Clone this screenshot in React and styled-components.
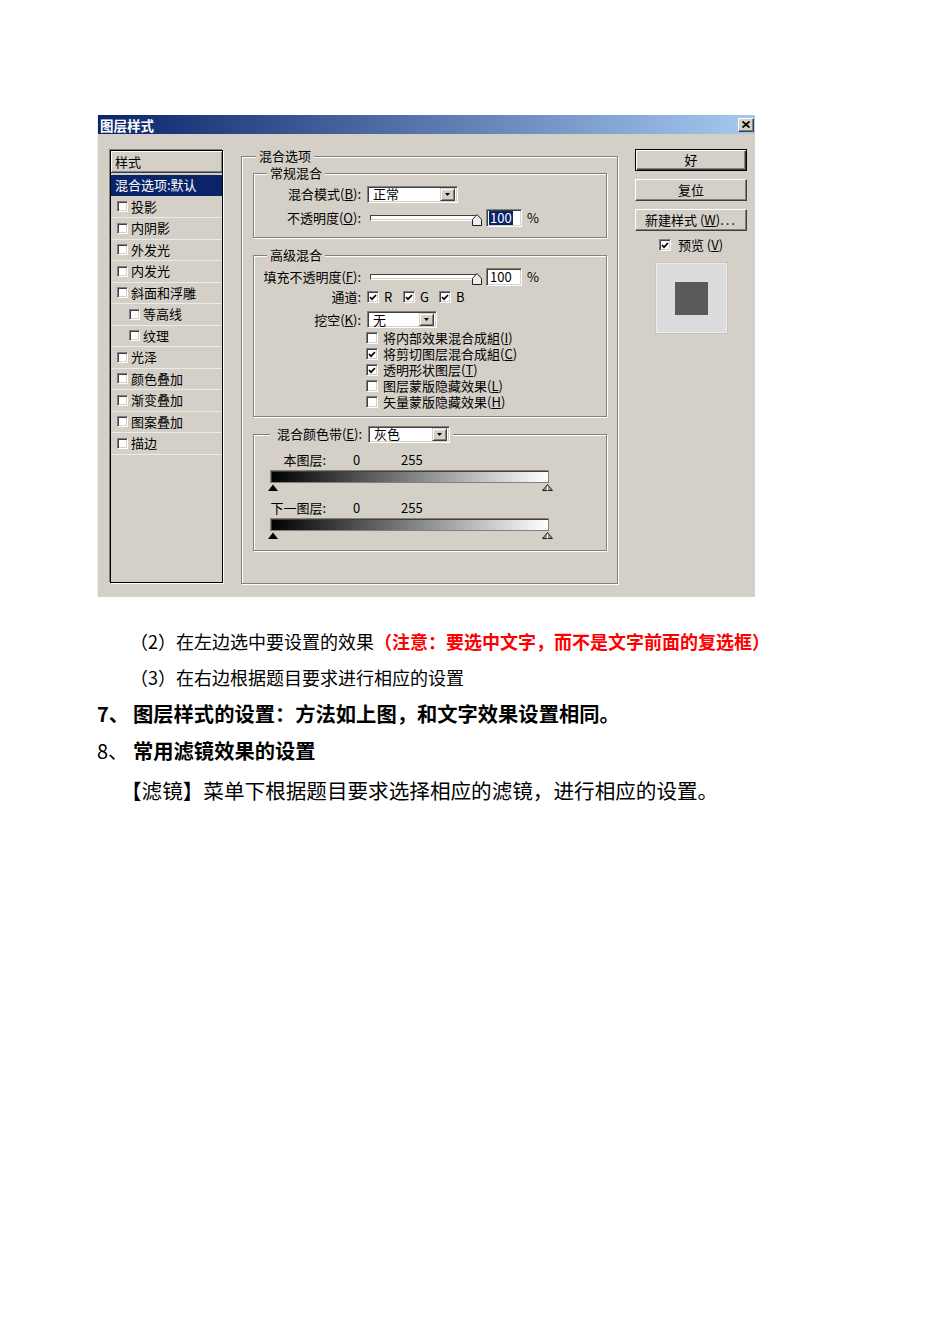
import React from "react";
import styled, { createGlobalStyle } from "styled-components";

const GlobalStyle = createGlobalStyle`
  body {
    margin: 0;
    background: #fff;
    color: #000;
    font-family: "Noto Sans CJK SC", "Noto Sans", sans-serif;
  }
`;

const Page = styled.div`
  width: 950px;
  min-height: 1317px;
  box-sizing: border-box;
  padding: 115px 0 0 97px;
`;

/* ---------- dialog frame ---------- */

const Dialog = styled.div`
  width: 658px;
  height: 482px;
  box-sizing: border-box;
  background: #d4d0c8;
  border-left: 1px solid #f4f2ee;
  display: flex;
  flex-direction: column;
  font-size: 13px;
  line-height: 14px;
`;

const TitleBar = styled.div`
  height: 19px;
  flex-shrink: 0;
  display: flex;
  align-items: center;
  justify-content: space-between;
  padding: 0 1px 0 2px;
  background: linear-gradient(to right, #0a246a, #a6caf0);
  color: #fff;
  font-size: 13.5px;
  font-weight: 700;
`;

const CloseButton = styled.div`
  width: 16px;
  height: 14px;
  box-sizing: border-box;
  background: #d4d0c8;
  border: 1px solid;
  border-color: #fff #404040 #404040 #fff;
  box-shadow: inset -1px -1px 0 #808080;
  display: flex;
  align-items: center;
  justify-content: center;
`;

const Body = styled.div`
  display: flex;
  align-items: flex-start;
  padding: 15px 0 0 12px;
`;

/* ---------- left style list ---------- */

const StyleList = styled.div`
  width: 113px;
  height: 433px;
  margin-top: 1px;
  box-sizing: border-box;
  border: 1px solid #000;
  box-shadow: -1px -1px 0 #808080, 1px 1px 0 #fff;
  flex-shrink: 0;
`;

const ListHeader = styled.div`
  height: 22px;
  box-sizing: border-box;
  padding-left: 4px;
  display: flex;
  align-items: center;
  border-bottom: 1px solid #404040;
  box-shadow: inset 1px 1px 0 #fff, inset -1px -1px 0 #808080;
  margin-bottom: 2px;
`;

const ListItem = styled.div`
  height: 21.5px;
  box-sizing: border-box;
  display: flex;
  align-items: center;
  gap: 3px;
  padding-left: ${(p) => (p.$selected ? 4 : 6 + p.$level * 12)}px;
  background: ${(p) => (p.$selected ? "#0a246a" : "transparent")};
  color: ${(p) => (p.$selected ? "#fff" : "#000")};
  border-bottom: 1px solid ${(p) => (p.$selected ? "#d4d0c8" : "#eeebe5")};
  white-space: nowrap;
`;

/* ---------- group boxes ---------- */

const Group = styled.div`
  width: ${(p) => p.$w}px;
  height: ${(p) => p.$h}px;
  margin: ${(p) => p.$mt}px 0 0 ${(p) => p.$ml}px;
  box-sizing: border-box;
  border: 1px solid #808080;
  box-shadow: inset 1px 1px 0 #fff, 1px 1px 0 #fff;
  flex-shrink: 0;
`;

const GroupTitle = styled.div`
  width: fit-content;
  height: ${(p) => p.$h}px;
  margin: ${(p) => -(p.$h / 2 + 1)}px 0 0 ${(p) => p.$ml}px;
  padding: 0 3px;
  display: flex;
  align-items: center;
  gap: 6px;
  background: #d4d0c8;
`;

const FieldRow = styled.div`
  height: ${(p) => p.$h}px;
  margin-top: ${(p) => p.$mt || 0}px;
  padding-left: ${(p) => p.$pl || 0}px;
  display: flex;
  align-items: center;
`;

const FieldLabel = styled.div`
  width: 107px;
  margin-right: 6px;
  text-align: right;
  flex-shrink: 0;
  white-space: nowrap;
`;

const BoxLabel = styled.span`
  display: block;
  height: 14px;
  line-height: 14px;
  margin-left: ${(p) => p.$gap}px;
  white-space: nowrap;
`;

/* ---------- controls ---------- */

const CheckBox = styled.span`
  width: ${(p) => p.$size}px;
  height: ${(p) => p.$size}px;
  box-sizing: border-box;
  flex-shrink: 0;
  background: #fff;
  border: 1px solid;
  border-color: #808080 #fff #fff #808080;
  box-shadow: inset 1px 1px 0 #404040, inset -1px -1px 0 #d4d0c8;
  display: flex;
  align-items: center;
  justify-content: center;
`;

const Check = ({ checked, size = 12 }) => (
  <CheckBox $size={size}>
    {checked && (
      <svg width="8" height="7" viewBox="0 0 8 7">
        <path d="M1 3 L3 5.2 L7 1" stroke="#000" strokeWidth="1.7" fill="none" />
      </svg>
    )}
  </CheckBox>
);

const SelectBox = styled.div`
  width: ${(p) => p.$w}px;
  height: 17px;
  box-sizing: border-box;
  flex-shrink: 0;
  background: #fff;
  border: 1px solid;
  border-color: #808080 #fff #fff #808080;
  box-shadow: inset 1px 1px 0 #404040, inset -1px -1px 0 #d4d0c8;
  display: flex;
  align-items: center;
  justify-content: space-between;
  padding: 0 2px 0 5px;
`;

const DropButton = styled.div`
  width: 15px;
  height: 13px;
  box-sizing: border-box;
  background: #d4d0c8;
  border: 1px solid;
  border-color: #d4d0c8 #404040 #404040 #d4d0c8;
  box-shadow: inset 1px 1px 0 #fff, inset -1px -1px 0 #808080;
  display: flex;
  align-items: center;
  justify-content: center;
`;

const Select = ({ value, width }) => (
  <SelectBox $w={width}>
    <span>{value}</span>
    <DropButton>
      <svg width="5" height="3" viewBox="0 0 5 3">
        <polygon points="0,0 5,0 2.5,3" fill="#000" />
      </svg>
    </DropButton>
  </SelectBox>
);

const SliderWrap = styled.div`
  position: relative;
  width: 112px;
  height: 14px;
  margin-left: 3px;
  flex-shrink: 0;
  display: flex;
  align-items: center;
`;

const SliderTrack = styled.div`
  width: 108px;
  height: 6px;
  box-sizing: border-box;
  background: #fff;
  border: 1px solid;
  border-color: #404040 #fff #fff #404040;
  box-shadow: inset -1px -1px 0 #d4d0c8;
`;

const SliderThumb = styled.svg`
  position: absolute;
  right: 0;
  top: 3px;
`;

const Slider = () => (
  <SliderWrap>
    <SliderTrack />
    <SliderThumb width="10" height="12" viewBox="0 0 10 12">
      <path d="M0.5 11.5 V5.5 L5 0.5 L9.5 5.5 V11.5 Z" fill="#f0f0f0" stroke="#202020" />
    </SliderThumb>
  </SliderWrap>
);

const TextInput = styled.div`
  width: 36px;
  height: 18px;
  margin-left: 4px;
  box-sizing: border-box;
  flex-shrink: 0;
  background: #fff;
  border: 1px solid;
  border-color: #808080 #fff #fff #808080;
  box-shadow: inset 1px 1px 0 #404040, inset -1px -1px 0 #d4d0c8;
  padding-left: 2px;
  display: flex;
  align-items: center;
`;

const InputValue = styled.span`
  padding: 0 1px;
  background: ${(p) => (p.$selected ? "#0a246a" : "transparent")};
  color: ${(p) => (p.$selected ? "#fff" : "#000")};
`;

const Percent = styled.span`
  margin-left: 5px;
`;

const ChannelItem = styled.div`
  width: 36px;
  display: flex;
  align-items: center;
`;

/* ---------- blend band ---------- */

const BandTitleLabel = styled.span`
  width: 89px;
  text-align: right;
  white-space: nowrap;
`;

const ValueRow = styled.div`
  height: 14px;
  margin-top: ${(p) => p.$mt}px;
  display: flex;
  align-items: center;
  gap: 27px;
`;

const BandLabel = styled.span`
  width: 72px;
  text-align: right;
  white-space: nowrap;
`;

const BandValue = styled.span`
  width: 21px;
`;

const GradientBar = styled.div`
  width: 279px;
  height: 13px;
  margin: 3px 0 0 16px;
  box-sizing: border-box;
  border: 1px solid #808080;
  box-shadow: inset 1px 1px 0 #404040;
  background: linear-gradient(to right, #000 0%, #fff 100%);
`;

const MarkerRow = styled.div`
  width: 285px;
  height: 7px;
  margin: 1px 0 0 14px;
  display: flex;
  justify-content: space-between;
`;

const Markers = () => (
  <MarkerRow>
    <svg width="10" height="7" viewBox="0 0 10 7">
      <polygon points="0,7 5,0.5 10,7" fill="#000" />
    </svg>
    <svg width="11" height="7" viewBox="0 0 11 7">
      <polygon points="0.5,6.5 5.5,0.5 10.5,6.5" fill="#9a9a9a" stroke="#202020" />
      <line x1="5.5" y1="2" x2="5.5" y2="6.5" stroke="#fff" />
    </svg>
  </MarkerRow>
);

/* ---------- right column ---------- */

const SideColumn = styled.div`
  width: 112px;
  margin-left: 17px;
  display: flex;
  flex-direction: column;
  align-items: center;
  flex-shrink: 0;
`;

const Button = styled.div`
  width: 112px;
  height: 22px;
  margin-bottom: 8px;
  box-sizing: border-box;
  display: flex;
  align-items: center;
  justify-content: center;
  white-space: nowrap;
  border: 1px solid;
  border-color: ${(p) => (p.$default ? "#000" : "#fff #404040 #404040 #fff")};
  box-shadow: ${(p) =>
    p.$default
      ? "inset 1px 1px 0 #fff, inset -1px -1px 0 #404040, inset -2px -2px 0 #808080"
      : "inset -1px -1px 0 #808080"};
`;

const Dots = styled.span`
  letter-spacing: 2px;
`;

const PreviewRow = styled.div`
  height: 16px;
  margin-top: -2px;
  display: flex;
  align-items: center;
  gap: 7px;
`;

const PreviewBox = styled.div`
  width: 71px;
  height: 70px;
  margin-top: 10px;
  box-sizing: border-box;
  background: #dcdcdc;
  border: 1px solid #eaeaea;
  box-shadow: 0 0 0 1px #c8c5bd;
  display: flex;
  align-items: center;
  justify-content: center;
`;

const PreviewSwatch = styled.div`
  width: 33px;
  height: 33px;
  background: #5a5a5a;
`;

/* ---------- document text ---------- */

const Notes = styled.div`
  margin-top: 26px;
`;

const Para = styled.p`
  margin: 0;
  padding-left: ${(p) => p.$indent}px;
  font-size: ${(p) => p.$size}px;
  line-height: ${(p) => p.$lh}px;
  font-weight: ${(p) => (p.$bold ? 700 : 400)};
  white-space: nowrap;
`;

const Warn = styled.span`
  color: #f00;
  font-weight: 700;
`;

const Marker = styled.span`
  display: inline-block;
  width: 36px;
  font-size: 20px;
  font-weight: ${(p) => (p.$plain ? 400 : 700)};
`;

const listItems = [
  ["投影", 0],
  ["内阴影", 0],
  ["外发光", 0],
  ["内发光", 0],
  ["斜面和浮雕", 0],
  ["等高线", 1],
  ["纹理", 1],
  ["光泽", 0],
  ["颜色叠加", 0],
  ["渐变叠加", 0],
  ["图案叠加", 0],
  ["描边", 0],
];

const options = [
  ["将内部效果混合成組", "I", false],
  ["将剪切图层混合成組", "C", true],
  ["透明形状图层", "T", true],
  ["图层蒙版隐藏效果", "L", false],
  ["矢量蒙版隐藏效果", "H", false],
];

const App = () => {
  return (
    <Page>
      <GlobalStyle />
      <Dialog>
        <TitleBar>
          <span>图层样式</span>
          <CloseButton>
            <svg width="8" height="7" viewBox="0 0 8 7">
              <path d="M0.5 0.5 L7.5 6.5 M7.5 0.5 L0.5 6.5" stroke="#000" strokeWidth="1.8" />
            </svg>
          </CloseButton>
        </TitleBar>

        <Body>
          <StyleList>
            <ListHeader>样式</ListHeader>
            <ListItem $selected>混合选项:默认</ListItem>
            {listItems.map(([name, level]) => (
              <ListItem key={name} $level={level}>
                <Check size={11} />
                {name}
              </ListItem>
            ))}
          </StyleList>

          <Group $w={377} $h={428} $mt={7} $ml={18}>
            <GroupTitle $h={14} $ml={14}>混合选项</GroupTitle>

            <Group $w={354} $h={65} $mt={10} $ml={11}>
              <GroupTitle $h={14} $ml={13}>常规混合</GroupTitle>
              <FieldRow $h={18} $mt={5}>
                <FieldLabel>
                  混合模式(<u>B</u>):
                </FieldLabel>
                <Select value="正常" width={91} />
              </FieldRow>
              <FieldRow $h={18} $mt={6}>
                <FieldLabel>
                  不透明度(<u>O</u>):
                </FieldLabel>
                <Slider />
                <TextInput>
                  <InputValue $selected>100</InputValue>
                </TextInput>
                <Percent>%</Percent>
              </FieldRow>
            </Group>

            <Group $w={354} $h={162} $mt={17} $ml={11}>
              <GroupTitle $h={14} $ml={13}>高级混合</GroupTitle>
              <FieldRow $h={18} $mt={6}>
                <FieldLabel>
                  填充不透明度(<u>F</u>):
                </FieldLabel>
                <Slider />
                <TextInput>
                  <InputValue>100</InputValue>
                </TextInput>
                <Percent>%</Percent>
              </FieldRow>
              <FieldRow $h={16} $mt={3}>
                <FieldLabel>通道:</FieldLabel>
                {["R", "G", "B"].map((c) => (
                  <ChannelItem key={c}>
                    <Check checked />
                    <BoxLabel $gap={5}>{c}</BoxLabel>
                  </ChannelItem>
                ))}
              </FieldRow>
              <FieldRow $h={17} $mt={6}>
                <FieldLabel>
                  挖空(<u>K</u>):
                </FieldLabel>
                <Select value="无" width={70} />
              </FieldRow>
              {options.map(([text, key, on], i) => (
                <FieldRow key={key} $h={16} $mt={i === 0 ? 2 : 0} $pl={112}>
                  <Check checked={on} />
                  <BoxLabel $gap={5}>
                    {text}(<u>{key}</u>)
                  </BoxLabel>
                </FieldRow>
              ))}
            </Group>

            <Group $w={354} $h={117} $mt={17} $ml={11}>
              <GroupTitle $h={17} $ml={16}>
                <BandTitleLabel>
                  混合颜色带(<u>E</u>):
                </BandTitleLabel>
                <Select value="灰色" width={82} />
              </GroupTitle>
              <ValueRow $mt={10}>
                <BandLabel>本图层:</BandLabel>
                <BandValue>0</BandValue>
                <BandValue>255</BandValue>
              </ValueRow>
              <GradientBar />
              <Markers />
              <ValueRow $mt={10}>
                <BandLabel>下一图层:</BandLabel>
                <BandValue>0</BandValue>
                <BandValue>255</BandValue>
              </ValueRow>
              <GradientBar />
              <Markers />
            </Group>
          </Group>

          <SideColumn>
            <Button $default>好</Button>
            <Button>复位</Button>
            <Button>
              新建样式 (<u>W</u>)<Dots>...</Dots>
            </Button>
            <PreviewRow>
              <Check checked />
              <span>
                预览 (<u>V</u>)
              </span>
            </PreviewRow>
            <PreviewBox>
              <PreviewSwatch />
            </PreviewBox>
          </SideColumn>
        </Body>
      </Dialog>

      <Notes>
        <Para $indent={33} $size={18} $lh={36}>
          （2）在左边选中要设置的效果
          <Warn>（注意：要选中文字，而不是文字前面的复选框）</Warn>
        </Para>
        <Para $indent={33} $size={18} $lh={36}>
          （3）在右边根据题目要求进行相应的设置
        </Para>
        <Para $indent={0} $size={20.3} $lh={37} $bold>
          <Marker>7、</Marker>图层样式的设置：方法如上图，和文字效果设置相同。
        </Para>
        <Para $indent={0} $size={20.3} $lh={37} $bold>
          <Marker $plain>8、</Marker>常用滤镜效果的设置
        </Para>
        <Para $indent={24} $size={20.6} $lh={42}>
          【滤镜】菜单下根据题目要求选择相应的滤镜，进行相应的设置。
        </Para>
      </Notes>
    </Page>
  );
};

export default App;
